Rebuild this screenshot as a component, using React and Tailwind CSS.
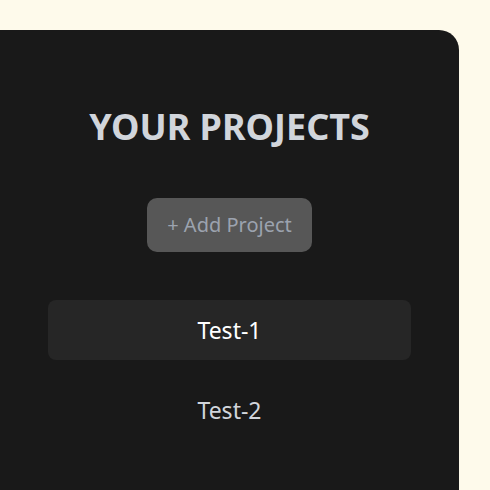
import React from "react";

const projects = ["Test-1", "Test-2"];

const App = () => {
  return (
    <div className="min-h-screen bg-[#fefaeb] pt-[30px] pr-[31px]" style={{ fontFamily: '"Noto Sans", "Open Sans", sans-serif' }}>
      <div className="h-[460px] bg-[#191919] rounded-tr-[20px] flex flex-col items-center pt-[74px] px-12">
        <h2 className="text-[36px] leading-[46px] font-bold text-[#d1d5db]">YOUR PROJECTS</h2>
        <button className="mt-[48px] w-[165px] h-[54px] rounded-[10px] bg-[#575757] text-[#9ca3af] text-[20px]">
          + Add Project
        </button>
        <ul className="w-full mt-12 space-y-5">
          {projects.map((p, i) => (
            <li
              key={p}
              className={`h-[60px] flex items-center justify-center rounded-lg text-[23px] ${
                i === 0 ? "bg-[#262626] text-white" : "text-[#d1d5db]"
              }`}
            >
              {p}
            </li>
          ))}
        </ul>
      </div>
    </div>
  );
};

export default App;
